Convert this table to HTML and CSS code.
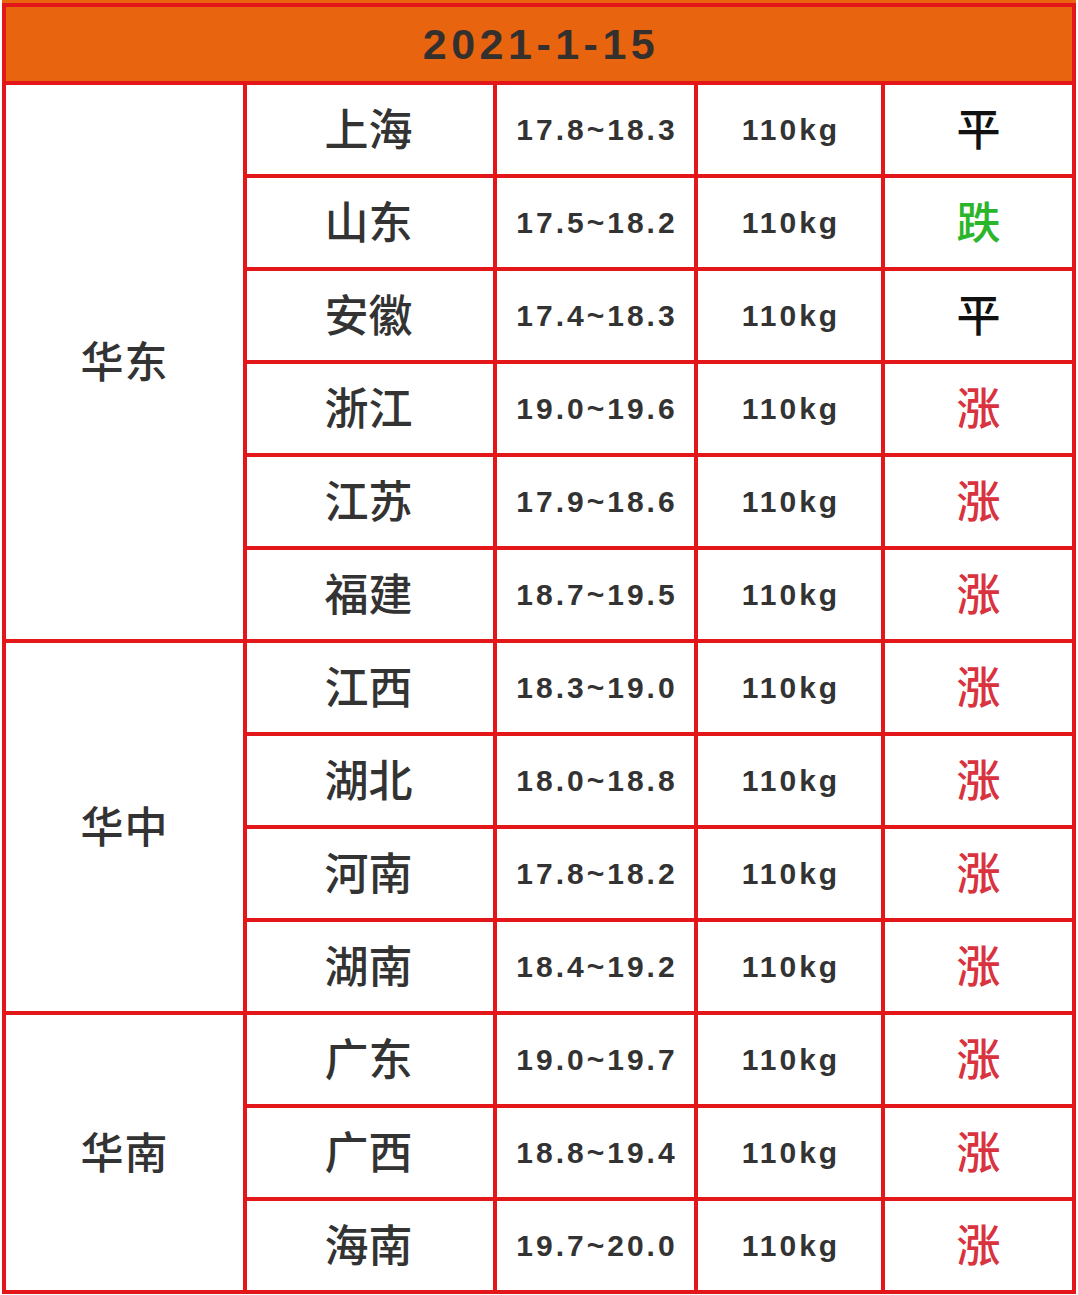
FILE: index.html
```html
<!DOCTYPE html>
<html lang="zh-CN">
<head>
<meta charset="utf-8">
<title>2021-1-15</title>
<link rel="stylesheet" href="styles.css">
</head>
<body>
<div class="topstrip"></div>
<div class="sheet">
  <div class="cell head">2021-1-15</div>

  <div class="cell region r-east">华东</div>
  <div class="cell prov">上海</div><div class="cell num">17.8~18.3</div><div class="cell wt">110kg</div><div class="cell st flat">平</div>
  <div class="cell prov">山东</div><div class="cell num">17.5~18.2</div><div class="cell wt">110kg</div><div class="cell st down">跌</div>
  <div class="cell prov">安徽</div><div class="cell num">17.4~18.3</div><div class="cell wt">110kg</div><div class="cell st flat">平</div>
  <div class="cell prov">浙江</div><div class="cell num">19.0~19.6</div><div class="cell wt">110kg</div><div class="cell st up">涨</div>
  <div class="cell prov">江苏</div><div class="cell num">17.9~18.6</div><div class="cell wt">110kg</div><div class="cell st up">涨</div>
  <div class="cell prov">福建</div><div class="cell num">18.7~19.5</div><div class="cell wt">110kg</div><div class="cell st up">涨</div>

  <div class="cell region r-central">华中</div>
  <div class="cell prov">江西</div><div class="cell num">18.3~19.0</div><div class="cell wt">110kg</div><div class="cell st up">涨</div>
  <div class="cell prov">湖北</div><div class="cell num">18.0~18.8</div><div class="cell wt">110kg</div><div class="cell st up">涨</div>
  <div class="cell prov">河南</div><div class="cell num">17.8~18.2</div><div class="cell wt">110kg</div><div class="cell st up">涨</div>
  <div class="cell prov">湖南</div><div class="cell num">18.4~19.2</div><div class="cell wt">110kg</div><div class="cell st up">涨</div>

  <div class="cell region r-south">华南</div>
  <div class="cell prov">广东</div><div class="cell num">19.0~19.7</div><div class="cell wt">110kg</div><div class="cell st up">涨</div>
  <div class="cell prov">广西</div><div class="cell num">18.8~19.4</div><div class="cell wt">110kg</div><div class="cell st up">涨</div>
  <div class="cell prov">海南</div><div class="cell num">19.7~20.0</div><div class="cell wt">110kg</div><div class="cell st up">涨</div>
</div>
</body>
</html>
```

FILE: styles.css
```css
html, body {
  margin: 0;
  padding: 0;
  background: #ffffff;
}

body {
  width: 1078px;
  height: 1295px;
  overflow: hidden;
  font-family: "Noto Sans CJK SC", "Liberation Sans", sans-serif;
}

.topstrip {
  width: 1074px;
  height: 3px;
  margin-left: 2px;
  background: #e9640f;
}

.sheet {
  margin-left: 2px;
  width: max-content;
  display: grid;
  grid-template-columns: 237px 246px 197px 183px 187px;
  grid-template-rows: 74px repeat(13, 89px);
  gap: 4px;
  padding: 4px;
  background: #e3161a;
}

.cell {
  background: #ffffff;
  display: flex;
  align-items: center;
  justify-content: center;
  color: #333333;
}

.head {
  grid-column: 1 / -1;
  background: #e9640f;
  font-family: "Liberation Sans", "Noto Sans CJK SC", sans-serif;
  font-weight: 700;
  font-size: 43px;
  letter-spacing: 4.5px;
  padding-left: 4px;
  color: #33302e;
}

.region {
  grid-column: 1;
  font-size: 43px;
  font-weight: 500;
  letter-spacing: 1px;
  padding-bottom: 6px;
}

.r-east { grid-row: 2 / span 6; }
.r-central { grid-row: 8 / span 4; }
.r-south { grid-row: 12 / span 3; }

.prov {
  font-size: 44px;
  font-weight: 500;
  letter-spacing: 0;
  padding-bottom: 6px;
  padding-right: 3px;
}

.num, .wt {
  font-family: "Liberation Sans", sans-serif;
  font-weight: 700;
  font-size: 30px;
  letter-spacing: 3px;
  padding-left: 3px;
  color: #333333;
}

.st {
  font-size: 44px;
  font-weight: 500;
  padding-bottom: 6px;
}

.flat { color: #111111; }
.down { color: #2bb52b; }
.up { color: #d8333f; }
```
